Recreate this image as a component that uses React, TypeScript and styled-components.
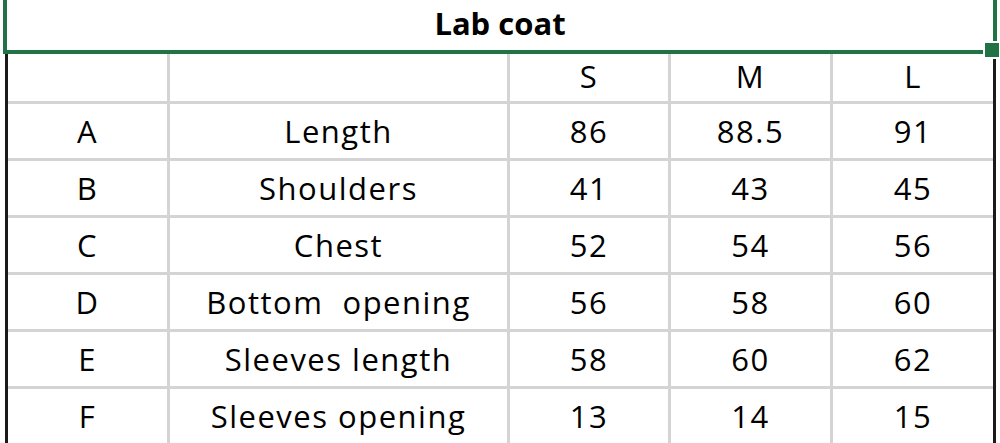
import styled, { createGlobalStyle } from 'styled-components'

const rows = [
  ['', '', 'S', 'M', 'L'],
  ['A', 'Length', '86', '88.5', '91'],
  ['B', 'Shoulders', '41', '43', '45'],
  ['C', 'Chest', '52', '54', '56'],
  ['D', 'Bottom\u00a0 opening', '56', '58', '60'],
  ['E', 'Sleeves length', '58', '60', '62'],
  ['F', 'Sleeves opening', '13', '14', '15'],
]

const GlobalStyle = createGlobalStyle`
  body {
    margin: 0;
    background: #ffffff;
    font-family: "Open Sans", "Liberation Sans", sans-serif;
  }
`

const App = () => {
  return (
    <Sheet>
      <GlobalStyle />
      <TitleCell>
        <TitleText>Lab coat</TitleText>
        <FillHandle />
      </TitleCell>
      <Grid>
        {rows.map((row, r) =>
          row.map((value, c) => (
            <Cell key={`${r}-${c}`} $header={r === 0}>
              {value}
            </Cell>
          ))
        )}
      </Grid>
    </Sheet>
  )
}

// the whole worksheet area
const Sheet = styled.div`
  position: relative;
  width: 1000px;
  height: 443px;
  overflow: hidden;
  background: #ffffff;
`

// merged title cell, currently selected (green border)
const TitleCell = styled.div`
  position: relative;
  box-sizing: border-box;
  width: 994px;
  height: 64px;
  margin: -10px 0 0 3px;
  border: 4px solid #217346;

  display: flex;
  align-items: flex-end;
  justify-content: center;
`

const TitleText = styled.div`
  font-weight: bold;
  font-size: 31px;
  line-height: 1;
  color: #000000;
  padding-bottom: 11px;
`

// little square at the bottom right corner of a selection
const FillHandle = styled.div`
  position: absolute;
  right: -8px;
  bottom: -9px;
  width: 14px;
  height: 14px;
  background: #217346;
  border: 2px solid #ffffff;
`

const Grid = styled.div`
  box-sizing: border-box;
  width: 991px;
  margin-left: 5px;
  display: grid;
  grid-template-columns: 159px 337px 158px 159px 160px;
  grid-template-rows: 47px repeat(6, 54px);
  column-gap: 3px;
  row-gap: 3px;
  background: #d4d4d4;
  border-left: 3px solid #1a1a1a;
  border-right: 3px solid #1a1a1a;
`

const Cell = styled.div<{ $header?: boolean }>`
  background: #ffffff;
  display: flex;
  align-items: flex-end;
  justify-content: center;
  white-space: pre;
  font-size: 31px;
  letter-spacing: 1.5px;
  line-height: 1;
  color: #000000;
  padding-bottom: ${(p) => (p.$header ? '9px' : '11px')};
  box-sizing: border-box;
`

export default App
